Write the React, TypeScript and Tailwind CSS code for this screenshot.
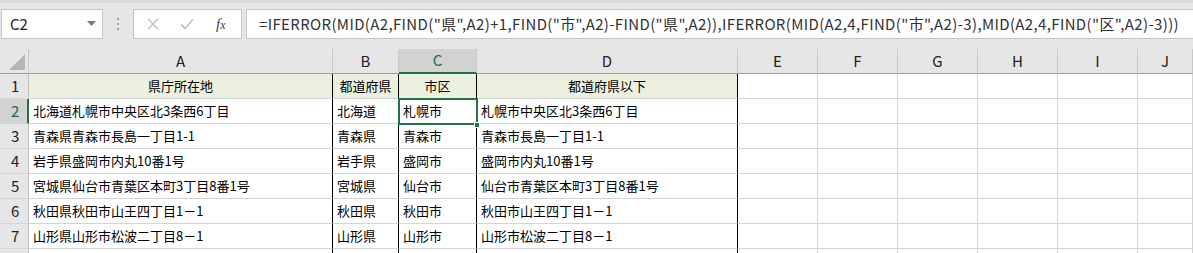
import React from "react";

const FONT = { fontFamily: '"Noto Sans CJK JP", "Noto Sans", sans-serif' };

const COLS = ["A", "B", "C", "D", "E", "F", "G", "H", "I", "J"];

// address, prefecture, city, rest
const rows = [
  ["県庁所在地", "都道府県", "市区", "都道府県以下"],
  ["北海道札幌市中央区北3条西6丁目", "北海道", "札幌市", "札幌市中央区北3条西6丁目"],
  ["青森県青森市長島一丁目1-1", "青森県", "青森市", "青森市長島一丁目1-1"],
  ["岩手県盛岡市内丸10番1号", "岩手県", "盛岡市", "盛岡市内丸10番1号"],
  ["宮城県仙台市青葉区本町3丁目8番1号", "宮城県", "仙台市", "仙台市青葉区本町3丁目8番1号"],
  ["秋田県秋田市山王四丁目1－1", "秋田県", "秋田市", "秋田市山王四丁目1－1"],
  ["山形県山形市松波二丁目8－1", "山形県", "山形市", "山形市松波二丁目8－1"],
  ["", "", "", ""],
];

const formula =
  '=IFERROR(MID(A2,FIND("県",A2)+1,FIND("市",A2)-FIND("県",A2)),IFERROR(MID(A2,4,FIND("市",A2)-3),MID(A2,4,FIND("区",A2)-3)))';

function FormulaBar() {
  return (
    <div className="h-[49px] bg-[#e6e6e6] border-t-[3px] border-[#dadada] flex items-center pt-[3px] pb-[7px]">
      {/* name box */}
      <div className="ml-px w-[102px] h-[30px] bg-white border border-[#c6c6c6] flex items-center justify-between pl-[8px] pr-[6px]">
        <span className="text-[15px] text-[#222]">C2</span>
        <svg width="9" height="6" viewBox="0 0 9 6">
          <path d="M0 0h9L4.5 5z" fill="#7a7a7a" />
        </svg>
      </div>
      <div className="w-[30px] flex flex-col items-center gap-[3px]">
        <span className="w-[2px] h-[2px] bg-[#a0a0a0]" />
        <span className="w-[2px] h-[2px] bg-[#a0a0a0]" />
        <span className="w-[2px] h-[2px] bg-[#a0a0a0]" />
      </div>
      {/* cancel / enter / fx */}
      <div className="w-[109px] h-[30px] bg-white border border-[#c6c6c6] flex items-center pl-[13px] gap-[21px]">
        <svg width="12" height="12" viewBox="0 0 12 12">
          <path d="M1 1l10 10M11 1L1 11" stroke="#c4c4c4" strokeWidth="1.6" />
        </svg>
        <svg width="14" height="12" viewBox="0 0 14 12">
          <path d="M1 6.5l4 4L13 1.5" stroke="#c4c4c4" strokeWidth="1.8" fill="none" />
        </svg>
        <span className="ml-[1px] text-[15px] italic text-[#444]" style={{ fontFamily: '"Liberation Serif", serif' }}>
          f<span className="text-[12px]">x</span>
        </span>
      </div>
      {/* formula input */}
      <div className="ml-[4px] flex-1 min-w-0 h-[30px] bg-white border border-[#c6c6c6] border-r-0 flex items-center pl-[12px] overflow-hidden">
        <span className="text-[15px] text-[#333] whitespace-nowrap tracking-[0.36px]">{formula}</span>
      </div>
    </div>
  );
}

function Sheet() {
  const colClass = (ci: number) => {
    // black borders between A|B, B|C, C|D and right of D
    if (ci <= 3) return "border-r-black";
    return "border-r-[#d4d4d4]";
  };

  return (
    <div className="relative grid grid-cols-[29px_304px_66px_78px_261px_80px_80px_80px_80px_80px_55px] grid-rows-[25px_repeat(8,25px)] bg-white">
      {/* corner */}
      <div className="relative bg-[#e6e6e6] border-r border-r-[#c8c8c8] border-b border-b-[#9e9e9e]">
        <svg className="absolute right-[3px] bottom-[3px]" width="16" height="16" viewBox="0 0 16 16">
          <path d="M16 0V16H0z" fill="#b6b6b6" />
        </svg>
      </div>
      {COLS.map((c) => {
        const active = c === "C";
        return (
          <div
            key={c}
            className={
              "flex items-center justify-center text-[15px] border-r border-r-[#c8c8c8] " +
              (active
                ? "bg-[#d2d2d2] text-[#1e6b40] border-b-2 border-b-[#217346]"
                : "bg-[#e6e6e6] text-[#222] border-b border-b-[#9e9e9e]")
            }
          >
            {c}
          </div>
        );
      })}

      {rows.map((r, ri) => {
        const num = ri + 1;
        const activeRow = num === 2;
        const header = ri === 0;
        return (
          <React.Fragment key={ri}>
            <div
              className={
                "flex items-center pl-[11px] text-[15px] border-b border-b-[#d4d4d4] " +
                (activeRow
                  ? "bg-[#d2d2d2] text-[#1e6b40] border-r-2 border-r-[#217346]"
                  : "bg-[#e6e6e6] text-[#222] border-r border-r-[#bdbdbd]")
              }
            >
              {num < 8 ? num : ""}
            </div>
            {COLS.map((c, ci) => {
              const text = ci < 4 ? r[ci] : "";
              return (
                <div
                  key={c}
                  className={
                    "flex items-center text-[13px] text-black whitespace-nowrap overflow-hidden border-r border-b border-b-[#d4d4d4] " +
                    colClass(ci) +
                    (header && ci < 4 ? " bg-[#ebf1de] justify-center" : " pl-[4px]")
                  }
                >
                  {text}
                </div>
              );
            })}
          </React.Fragment>
        );
      })}

      {/* active cell C2 */}
      <div className="absolute left-[398px] top-[49px] w-[80px] h-[27px] border-2 border-[#217346] pointer-events-none" />
      <div className="absolute left-[474px] top-[73px] w-[6px] h-[6px] bg-[#217346] border border-white" />
    </div>
  );
}

export default function App() {
  return (
    <div className="w-[1193px] h-[253px] overflow-hidden bg-[#e6e6e6]" style={FONT}>
      <FormulaBar />
      <Sheet />
    </div>
  );
}
